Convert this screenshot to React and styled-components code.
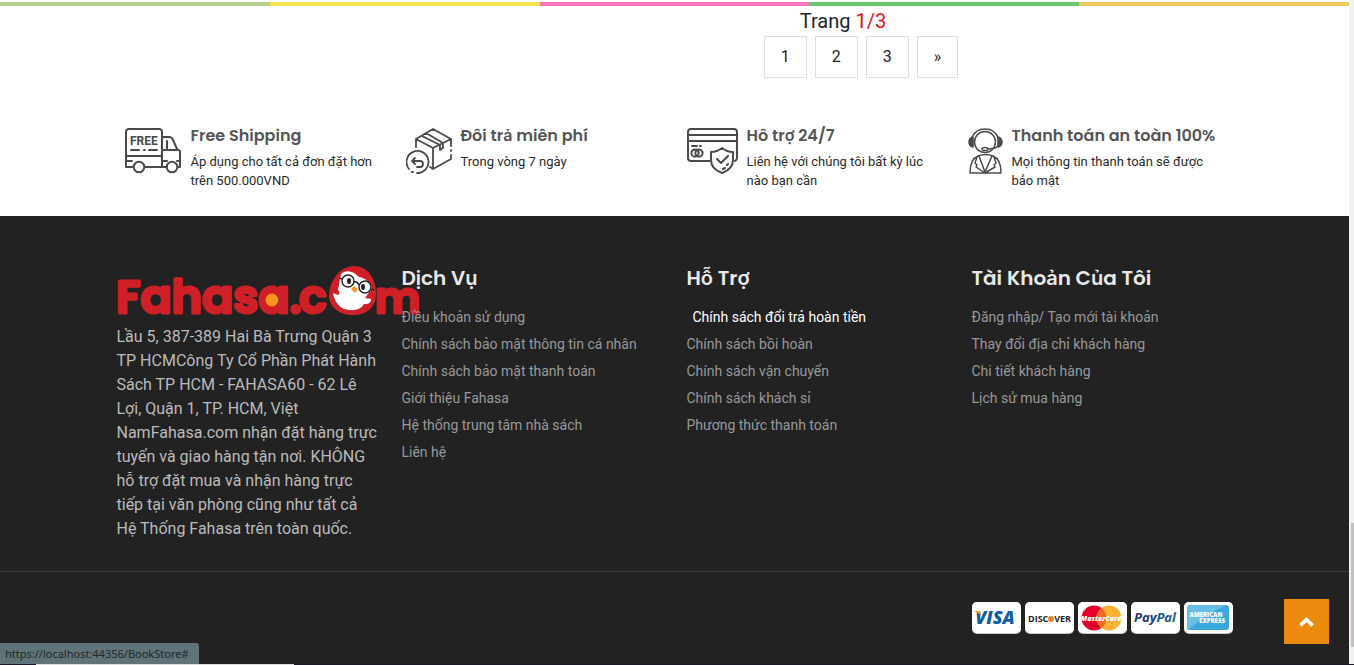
import React from 'react';
import styled, { createGlobalStyle } from 'styled-components';

const GlobalStyle = createGlobalStyle`
  *, *::before, *::after { box-sizing: border-box; }
  body {
    margin: 0;
    background: #fff;
    color: #212529;
    font-family: Roboto, "Liberation Sans", sans-serif;
    font-size: 16px;
    line-height: 24px;
  }
  ul, p, h3, h4 { margin: 0; padding: 0; }
  ul { list-style: none; }
  a { color: inherit; text-decoration: none; }
`;

const headingFont = 'Poppins, Inter, "Open Sans", sans-serif';

const Page = styled.div`
  display: flex;
  flex-direction: column;
  min-height: 100vh;
  padding-right: 5px;
`;

const ColourBar = styled.div`
  position: fixed;
  top: 2px;
  left: 0;
  right: 5px;
  display: flex;
  height: 4px;
`;

const Stripe = styled.span`
  flex: 1;
  background: ${({ $color }) => $color};
`;

const Container = styled.div`
  width: 100%;
  max-width: 1146px;
  margin: 0 auto;
  padding: 0 15px;
`;

const Pager = styled.nav`
  margin-left: 58%;
  padding-top: 6px;
`;

const PageCount = styled.p`
  padding-left: 36px;
  font-size: 20px;
  line-height: 30px;

  span { color: #e8101a; }
`;

const PageLinks = styled.ul`
  display: flex;
  gap: 8px;
`;

const PageLink = styled.a`
  display: block;
  padding: 8px 16px;
  border: 1px solid #ddd;
  color: #222;
`;

const Features = styled.section`
  display: grid;
  grid-template-columns: repeat(4, 1fr);
  gap: 7px;
  margin-right: -9px;
  padding: 48px 0 26px 8px;
`;

const Feature = styled.article`
  display: flex;
  align-items: flex-start;
  gap: 9px;
  padding-right: 16px;

  svg { flex: none; margin-top: 2px; }
`;

const FeatureTitle = styled.h3`
  color: #555;
  font: 600 16px/20px ${headingFont};
  white-space: nowrap;
`;

const FeatureText = styled.p`
  padding-top: 6px;
  color: #2a2a2a;
  font-size: 13px;
  line-height: 19px;
`;

const Footer = styled.footer`
  flex: 1;
  background: #222;
  color: #bbb;
`;

const FooterColumns = styled.div`
  display: grid;
  grid-template-columns: repeat(4, minmax(0, 1fr));
  column-gap: 24px;
  padding: 50px 0 30px;
`;

const Logo = styled.a`
  display: block;
  height: 50px;
  margin-bottom: 9px;

  svg { display: block; overflow: visible; }
`;

const FooterTitle = styled.h4`
  margin-bottom: 14px;
  color: #e8e8e8;
  font: 600 20px/24px ${headingFont};
`;

const FooterLink = styled.a`
  display: block;
  padding-left: ${({ $active }) => ($active ? 6 : 0)}px;
  color: ${({ $active }) => ($active ? '#fff' : '#999')};
  font-size: 14px;
  line-height: 27px;
  white-space: nowrap;
`;

const FooterBottom = styled.div`
  padding: 30px 0;
  border-top: 1px solid #3c3c3c;
`;

const Payments = styled.ul`
  display: flex;
  justify-content: flex-end;
  gap: 4px;

  svg { display: block; }
`;

const BackToTop = styled.button`
  position: fixed;
  right: 25px;
  bottom: 21px;
  display: grid;
  place-items: center;
  width: 45px;
  height: 45px;
  padding: 0;
  border: 0;
  background: #ec8a0e;
`;

const StatusBubble = styled.div`
  position: fixed;
  left: 0;
  bottom: 1px;
  padding: 0 10px 0 5px;
  border-top-right-radius: 3px;
  background: #5f7378;
  color: #20282a;
  font: 11px/21px "Noto Sans", "Open Sans", sans-serif;
`;

const BottomEdge = styled.div`
  position: fixed;
  left: 0;
  right: 0;
  bottom: 0;
  height: 1px;
  padding-left: 36px;
  background: #1b1728;

  span { display: block; width: 258px; height: 1px; background: #ddd; }
`;

const ScrollTrack = styled.div`
  position: fixed;
  top: 0;
  right: 0;
  bottom: 1px;
  width: 5px;
  background: #f1f1f1;
`;

const ScrollThumb = styled.div`
  position: absolute;
  right: 0;
  bottom: 17px;
  width: 3px;
  height: 124px;
  background: #c1c1c1;
`;

const line = { fill: 'none', stroke: '#4a4a4a', strokeWidth: 2, strokeLinejoin: 'round', strokeLinecap: 'round' };

const TruckIcon = () => (
  <svg width="57" height="46" viewBox="0 0 57 46" {...line} aria-hidden="true">
    <path d="M8 39H1V4q0-3 3-3h30q3 0 3 3v35H20M1 28h36M1 33h6M38 9h6q3 0 4 3l4 9 3 2v16h-2M42 39h-4M42 13v9M38 22h14M38 33h4M52 33h3" />
    <circle cx="14" cy="39" r="5.3" />
    <circle cx="47" cy="39" r="5.3" />
    <path d="M6 22h8M19 22h1M24 22h8" />
    <text x="5" y="17" fill="#4a4a4a" stroke="none" fontFamily="Roboto, sans-serif" fontWeight="700" fontSize="12">FREE</text>
  </svg>
);

const ReturnIcon = () => (
  <svg width="46" height="46" viewBox="0 0 46 46" {...line} strokeWidth="1.8" aria-hidden="true">
    <path d="M10 19V11L27 1l18 10v7M45 22v1M45 27v4L27 41l-3-2M10 11l17 9 18-9M27 20v20M16 8l18 9v5l3-2v-5L20 5" />
    <path d="M3 41A11 11 0 1 1 11 45M6 44h1" />
    <path d="M9 30l-3 3 3 3M6 33h8q3 0 3 3t-3 3h-3" />
  </svg>
);

const CardIcon = () => (
  <svg width="51" height="46" viewBox="0 0 51 46" {...line} aria-hidden="true">
    <path d="M23 33H4q-3 0-3-3V4q0-3 3-3h43q3 0 3 3v26q0 2-2 3M1 7h49M1 13h49" />
    <path d="M5 18h5M13 18h1M35 20q5 4 11 4v8q0 9-11 13-11-4-11-13v-8q6 0 11-4zM30 31l4 4 7-7M36 41l2-1M40 37l1-1" />
    <circle cx="8" cy="25" r="3.6" />
    <circle cx="12" cy="25" r="3.6" />
  </svg>
);

const AgentIcon = () => (
  <svg width="35" height="46" viewBox="0 0 35 46" {...line} strokeWidth="1.5" aria-hidden="true">
    <circle cx="17" cy="14" r="10.5" />
    <path d="M4 10Q7 1 17 1t13 9" />
    <path d="M5 9q-4 1-4 5t4 5zM30 9q4 1 4 5t-4 5z" fill="#4a4a4a" />
    <path d="M30 18q-3 3-10 3" />
    <ellipse cx="17" cy="21" rx="3" ry="1.6" fill="#fff" />
    <path d="M10 28Q2 31 2 45h31q0-14-8-17M10 28q7-3 15 0M11 28l6 16 7-16M9 29l-2 6 2 2-1 2 9 6M26 29l2 6-2 2 1 2-10 6" />
  </svg>
);

const LogoArt = () => (
  <svg width="302" height="50" viewBox="0 0 302 50" role="img" aria-label="Fahasa.com">
    <g fill="#cf2027" stroke="#cf2027" strokeWidth="3" strokeLinejoin="round" fontFamily={headingFont} fontWeight="600" fontSize="46">
      <text x="-1" y="47">Fahasa.</text>
      <text x="182" y="47">c</text>
      <text x="258" y="47" fontSize="43">m</text>
    </g>
    <circle cx="155" cy="34" r="6.5" fill="#f7931e" />
    <path d="M212 30C212 14 224 0 237 0c14 0 22 13 22 28 0 13-9 21-23 21s-24-8-24-19z" fill="#cf2027" />
    <path d="M224 8c5-5 13-3 18 3 7 1 12 6 13 12l-5 6 -2 3 6 1c0 5-4 5-7 5-4 7-13 7-20 5-6-3-10-9-11-16l5 2c2-1 2-3 0-5z" fill="#fff" />
    <g fill="#fff" stroke="#222" strokeWidth="1.400">
      <circle cx="231" cy="15" r="6" />
      <circle cx="248" cy="21" r="6" />
      <path d="M237 16q3-1 5 3M225 13l-3-1M254 23l3 1" />
    </g>
    <ellipse cx="232" cy="15" rx="2" ry="3" fill="#222" />
    <ellipse cx="246" cy="21" rx="2" ry="3" fill="#222" />
    <path d="M237 20l4 3-3 4-4-4z" fill="#f7931e" />
  </svg>
);

const CardFrame = ({ label, children }) => (
  <svg width="49" height="32" viewBox="0 0 49 32" role="img" aria-label={label}>
    <rect width="49" height="32" rx="5" fill="#c9c9c9" />
    <rect width="49" height="31" rx="5" fill="#fff" />
    {children}
  </svg>
);

const cardText = { textAnchor: 'middle', fontFamily: 'Open Sans, sans-serif', fontWeight: 800 };

const cards = [
  <CardFrame label="Visa">
    <text x="23" y="22" {...cardText} fontSize="18" fontStyle="italic" fill="#0e5da8">VISA</text>
    <path d="M2 9h6l2 6q-3-4-8-6z" fill="#f0a02c" />
  </CardFrame>,
  <CardFrame label="Discover">
    <text x="3" y="20" {...cardText} fontWeight="700" textAnchor="start" fontSize="9" fill="#222">DISC</text>
    <circle cx="26" cy="17" r="3" fill="#ee8130" />
    <text x="46" y="20" {...cardText} fontWeight="700" textAnchor="end" fontSize="9" fill="#222">VER</text>
  </CardFrame>,
  <CardFrame label="MasterCard">
    <circle cx="16" cy="16" r="12.5" fill="#e4002b" />
    <circle cx="31" cy="16" r="12.5" fill="#f9b233" />
    <path d="M23.500 6a12.500 12.500 0 0 1 0 20a12.500 12.500 0 0 1 0-20z" fill="#ee6a20" />
    <text x="23" y="19" {...cardText} fontSize="7" fontStyle="italic" fill="#fff">MasterCard</text>
  </CardFrame>,
  <CardFrame label="PayPal">
    <text x="24" y="20" {...cardText} fontWeight="700" fontSize="13" fontStyle="italic" fill="#1e3a6e">Pay<tspan fill="#27588f">Pal</tspan></text>
  </CardFrame>,
  <CardFrame label="American Express">
    <rect x="3" y="3" width="42" height="25" rx="3" fill="#3aa9da" />
    <path d="M3 26V6q0-3 3-3h37Q25 10 4 28z" fill="#67bfe4" />
    <text x="22" y="15" {...cardText} fontSize="6" fill="#fff">AMERICAN</text>
    <text x="28" y="21" {...cardText} fontSize="6" fill="#fff">EXPRESS</text>
  </CardFrame>,
];

const features = [
  { icon: <TruckIcon />, title: 'Free Shipping', text: 'Áp dụng cho tất cả đơn đặt hơn trên 500.000VND' },
  { icon: <ReturnIcon />, title: 'Đôi trả miên phí', text: 'Trong vòng 7 ngày' },
  { icon: <CardIcon />, title: 'Hô trợ 24/7', text: 'Liên hệ với chúng tôi bất kỳ lúc nào bạn cần' },
  { icon: <AgentIcon />, title: 'Thanh toán an toàn 100%', text: 'Mọi thông tin thanh toán sẽ được bảo mật' },
];

const linkGroups = [
  {
    title: 'Dịch Vụ',
    links: ['Điều khoản sử dụng', 'Chính sách bảo mật thông tin cá nhân', 'Chính sách bảo mật thanh toán', 'Giới thiệu Fahasa', 'Hệ thống trung tâm nhà sách', 'Liên hệ'],
  },
  {
    title: 'Hỗ Trợ',
    active: 0,
    links: ['Chính sách đổi trả hoàn tiền', 'Chính sách bồi hoàn', 'Chính sách vận chuyển', 'Chính sách khách sỉ', 'Phương thức thanh toán'],
  },
  {
    title: 'Tài Khoản Của Tôi',
    links: ['Đăng nhập/ Tạo mới tài khoản', 'Thay đổi địa chỉ khách hàng', 'Chi tiết khách hàng', 'Lịch sử mua hàng'],
  },
];

const stripes = ['#b5cf8c', '#f2e44c', '#f279be', '#6fc46f', '#eec95e'];

export default function App() {
  return (
    <Page>
      <GlobalStyle />
      <ColourBar>
        {stripes.map((c) => <Stripe key={c} $color={c} />)}
      </ColourBar>
      <Container>
        <Pager aria-label="Trang">
          <PageCount>Trang <span>1/3</span></PageCount>
          <PageLinks>
            {['1', '2', '3', '»'].map((p) => (
              <li key={p}><PageLink href="#">{p}</PageLink></li>
            ))}
          </PageLinks>
        </Pager>
        <Features>
          {features.map((f) => (
            <Feature key={f.title}>
              {f.icon}
              <div>
                <FeatureTitle>{f.title}</FeatureTitle>
                <FeatureText>{f.text}</FeatureText>
              </div>
            </Feature>
          ))}
        </Features>
      </Container>
      <Footer>
        <Container>
          <FooterColumns>
            <div>
              <Logo href="#"><LogoArt /></Logo>
              <p>
                Lầu 5, 387-389 Hai Bà Trưng Quận 3 TP HCMCông Ty Cổ Phần Phát Hành Sách TP HCM - FAHASA60 - 62 Lê
                Lợi, Quận 1, TP. HCM, Việt NamFahasa.com nhận đặt hàng trực tuyến và giao hàng tận nơi. KHÔNG hỗ trợ
                đặt mua và nhận hàng trực tiếp tại văn phòng cũng như tất cả Hệ Thống Fahasa trên toàn quốc.
              </p>
            </div>
            {linkGroups.map((g) => (
              <div key={g.title}>
                <FooterTitle>{g.title}</FooterTitle>
                <ul>
                  {g.links.map((l, i) => (
                    <li key={l}><FooterLink href="#" $active={g.active === i}>{l}</FooterLink></li>
                  ))}
                </ul>
              </div>
            ))}
          </FooterColumns>
        </Container>
        <FooterBottom>
          <Container>
            <Payments>
              {cards.map((c) => <li key={c.props.label}>{c}</li>)}
            </Payments>
          </Container>
        </FooterBottom>
      </Footer>
      <BackToTop type="button" aria-label="Lên đầu trang">
        <svg width="15" height="10" viewBox="0 0 15 10" fill="none" stroke="#fff" strokeWidth="3.600">
          <path d="M1.500 8.500l6-6 6 6" />
        </svg>
      </BackToTop>
      <ScrollTrack><ScrollThumb /></ScrollTrack>
      <BottomEdge><span /></BottomEdge>
      <StatusBubble>https://localhost:44356/BookStore#</StatusBubble>
    </Page>
  );
}
